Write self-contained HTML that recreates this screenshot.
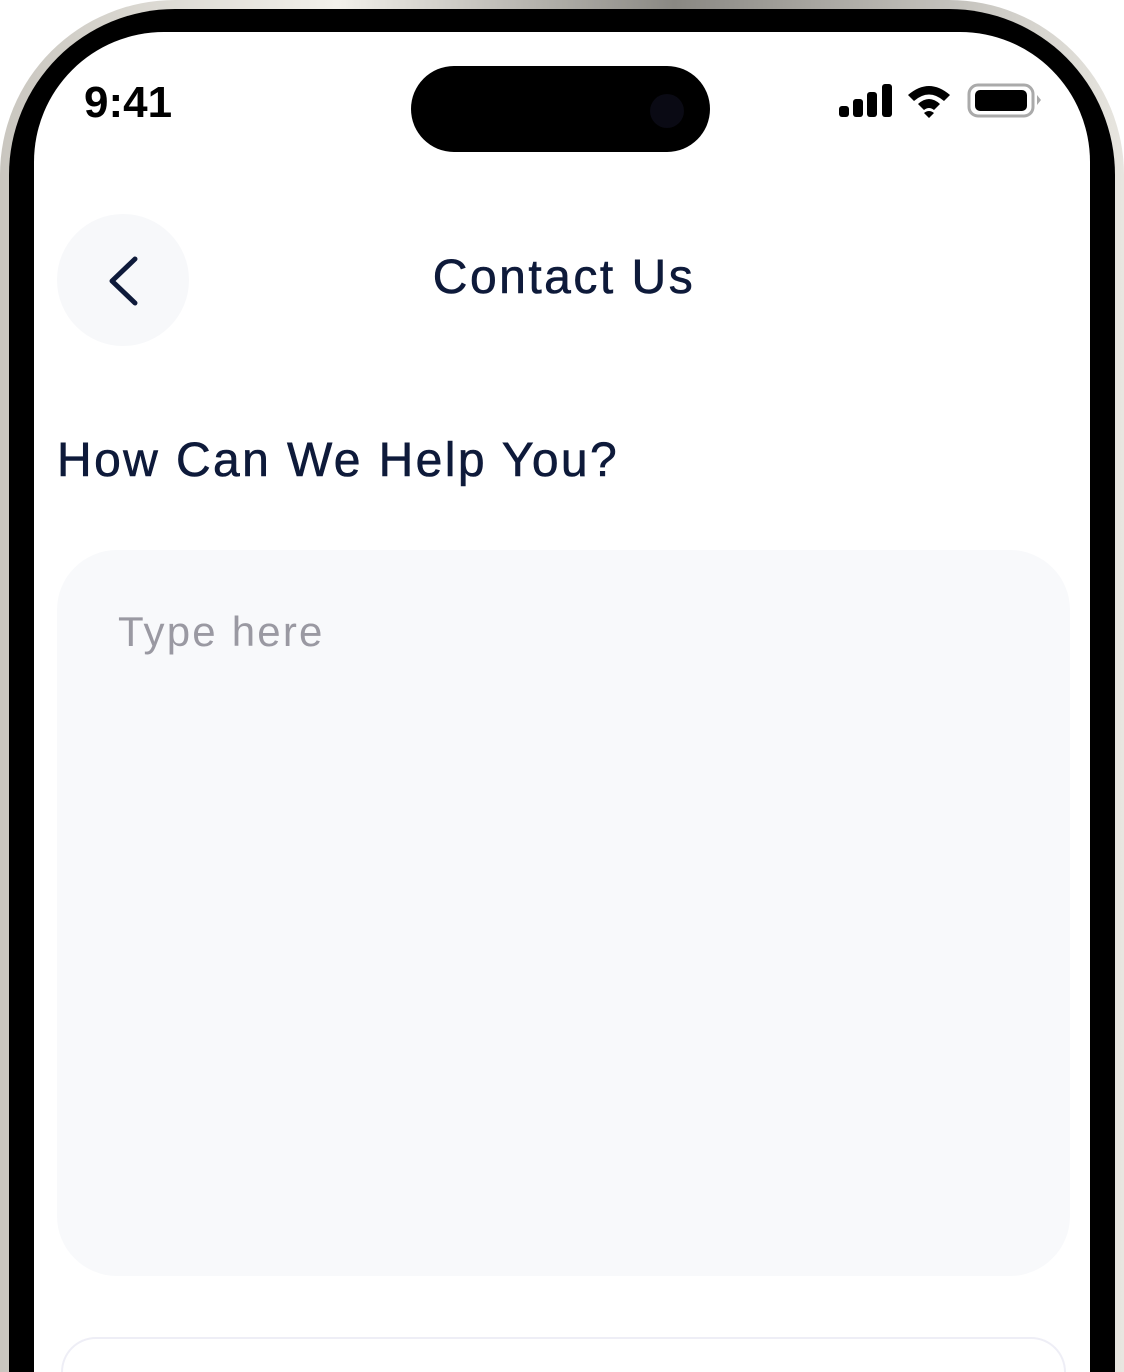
<!DOCTYPE html>
<html><head><style>
html,body{margin:0;padding:0;background:#fff;width:1124px;height:1372px;overflow:hidden;font-family:"Liberation Sans",sans-serif}
#w{position:relative;width:1124px;height:1372px;overflow:hidden}
.f1{position:absolute;left:0;top:0;width:1124px;height:1372px;border-radius:175px 175px 0 0;background:linear-gradient(90deg,#c9c6bf,#f2f0ea 30%,#8a8883 60%,#e8e6e0);}
.f2{position:absolute;left:9px;top:9px;width:1106px;height:1363px;border-radius:166px 166px 0 0;background:#000}
.scr{position:absolute;left:34px;top:32px;width:1056px;height:1340px;border-radius:130px 130px 0 0;background:#fff}
.t{position:absolute;color:#0e1a3a;white-space:nowrap}
</style></head><body><div id="w">
<div class="f1"></div><div class="f2"></div>
<div class="scr"></div>
<div style="position:absolute;left:411px;top:66px;width:299px;height:86px;border-radius:43px;background:#000"></div>
<div style="position:absolute;left:650px;top:94px;width:34px;height:34px;border-radius:17px;background:#0a0a14"></div>
<div class="t" style="left:84px;top:78px;font-size:44px;font-weight:bold;color:#000">9:41</div>
<svg style="position:absolute;left:836px;top:80px" width="210" height="40">
<rect x="3" y="26" width="10" height="11" rx="3"/><rect x="17" y="19" width="10" height="18" rx="3"/><rect x="31" y="12" width="10" height="25" rx="3"/><rect x="46" y="4" width="10" height="33" rx="3"/>
<path d="M72 15 Q93 -3 114 15 L108 21 Q93 8 78 21 Z M82 24 Q93 14 104 24 L98 30 Q93 26 88 30 Z M93 38 L88 33 Q93 29 98 33 Z"/>
<rect x="133" y="5" width="64" height="31" rx="9" fill="none" stroke="#aaa" stroke-width="3"/>
<rect x="139" y="10" width="52" height="21" rx="5"/>
<path d="M201 15 L205 20 L201 25Z" fill="#aaa"/>
</svg>
<div style="position:absolute;left:57px;top:214px;width:132px;height:132px;border-radius:66px;background:#f7f8fa"></div>
<svg style="position:absolute;left:100px;top:250px" width="50" height="60"><path d="M35 9 L12 31 L35 53" fill="none" stroke="#0e1a3a" stroke-width="5" stroke-linecap="round" stroke-linejoin="round"/></svg>
<div class="t" style="left:4px;width:1120px;text-align:center;top:250px;font-size:48px;letter-spacing:2.5px;-webkit-text-stroke:0.6px #0e1a3a">Contact Us</div>
<div class="t" style="left:57px;top:433px;font-size:48px;letter-spacing:2.4px;-webkit-text-stroke:0.6px #0e1a3a">How Can We Help You?</div>
<div style="position:absolute;left:57px;top:550px;width:1013px;height:726px;border-radius:60px;background:#f8f9fb"></div>
<div class="t" style="left:118px;top:608px;font-size:42px;letter-spacing:2.2px;color:#9a99a2">Type here</div>
<div style="position:absolute;left:61px;top:1337px;width:1001px;height:33px;border-radius:60px 60px 0 0;border:2px solid #eeeef6;border-bottom:none;background:#fff"></div>
</div></body></html>
